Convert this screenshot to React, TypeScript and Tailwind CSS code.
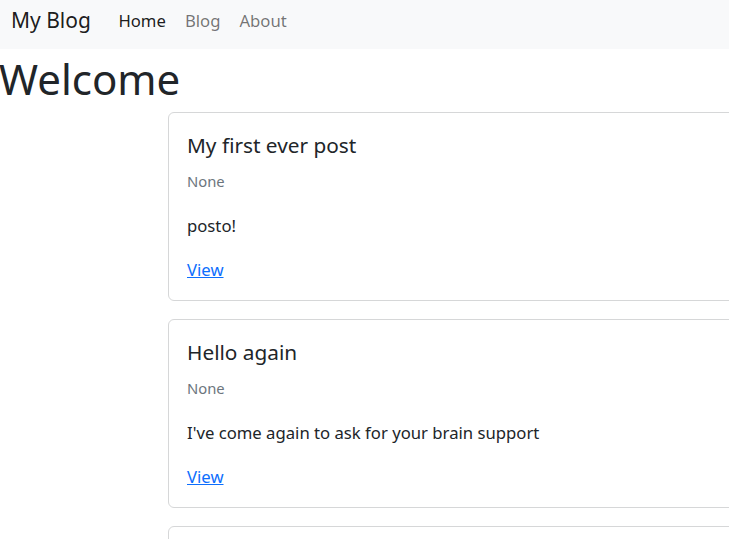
import React from "react";

const posts = [
  { title: "My first ever post", body: "posto!" },
  { title: "Hello again", body: "I've come again to ask for your brain support" },
];

function PostCard({ title, body }: { title: string; body: string }) {
  return (
    <div className="w-[640px] shrink-0 rounded-[6px] border border-[#d6d7d8] bg-white px-[18px] pt-[20px] pb-[18px] mb-[18px]">
      <h5 className="text-[20.8px] leading-[24px] text-[#212529] mb-[14px]">{title}</h5>
      <h6 className="text-[14.8px] leading-[21px] text-[#6c757d] mb-[22px]">None</h6>
      <p className="text-[16.7px] leading-[24px] text-[#212529] mb-[20px]">{body}</p>
      <a href="#" className="text-[16.7px] leading-[24px] text-[#0d6efd] underline">
        View
      </a>
    </div>
  );
}

export default function App() {
  return (
    <div className="w-[729px] h-[539px] overflow-hidden bg-white font-['Noto_Sans',sans-serif] text-[#212529]">
      <nav className="h-[49px] bg-[#f8f9fa] flex items-center px-[11px] pb-[8px]">
        <a href="#" className="text-[21px] text-black/90 mr-[18px]">
          My Blog
        </a>
        <ul className="flex text-[16.7px]">
          <li>
            <a href="#" className="px-[9.5px] text-black/90">Home</a>
          </li>
          <li>
            <a href="#" className="px-[9.5px] text-black/55">Blog</a>
          </li>
          <li>
            <a href="#" className="px-[9.5px] text-black/55">About</a>
          </li>
        </ul>
      </nav>
      <h1 className="text-[42px] leading-[60px] -ml-[1px] mb-[3px]">Welcome</h1>
      <div className="pl-[168px] flex flex-col">
        {posts.map((p) => (
          <PostCard key={p.title} title={p.title} body={p.body} />
        ))}
        <div className="w-[640px] h-[60px] shrink-0 rounded-[6px] border border-[#d6d7d8] bg-white" />
      </div>
    </div>
  );
}
